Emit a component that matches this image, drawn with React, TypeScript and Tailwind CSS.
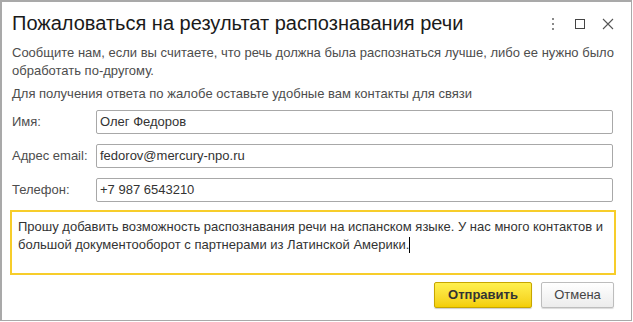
import React from "react";

export default function App() {
  const font = { fontFamily: '"Liberation Sans", Arial, sans-serif' };
  return (
    <div className="w-[633px] h-[322px] bg-white" style={font}>
      <div className="w-[632px] h-[321px] border-t-2 border-l-2 border-r border-b border-[#a9a9a9] bg-white flex flex-col">
        <div className="h-[38px] flex items-center pl-[10px] pr-[16px]">
          <div className="flex-1 text-[20px] text-[#1a1a1a] leading-none pt-[4px]">
            Пожаловаться на результат распознавания речи
          </div>
          <div className="flex items-center gap-[14px] pt-[6px]">
            <svg width="12" height="14" viewBox="0 0 12 14">
              <rect x="5" y="1" width="2" height="2" fill="#8a8a8a" />
              <rect x="5" y="6" width="2" height="2" fill="#8a8a8a" />
              <rect x="5" y="11" width="2" height="2" fill="#8a8a8a" />
            </svg>
            <svg width="14" height="14" viewBox="0 0 14 14">
              <rect x="2.5" y="2.5" width="9" height="9" fill="none" stroke="#444" strokeWidth="1" />
            </svg>
            <svg width="14" height="14" viewBox="0 0 14 14">
              <path d="M2 2 L12 12 M12 2 L2 12" stroke="#555" strokeWidth="1.1" />
            </svg>
          </div>
        </div>
        <div className="px-[10px] pt-[4px] text-[13px] leading-[18px] text-[#4d4d4d]">
          <p>Сообщите нам, если вы считаете, что речь должна была распознаться лучше, либо ее нужно было обработать по-другому.</p>
          <p className="mt-[5px]">Для получения ответа по жалобе оставьте удобные вам контакты для связи</p>
        </div>
        <div className="flex flex-col gap-[10px] mt-[7px] pl-[10px] pr-[18px]">
          {[
            ["Имя:", "Олег Федоров"],
            ["Адрес email:", "fedorov@mercury-npo.ru"],
            ["Телефон:", "+7 987 6543210"],
          ].map(([label, value]) => (
            <div key={label} className="flex items-center h-[24px]">
              <div className="w-[84px] text-[13px] text-[#4d4d4d]">{label}</div>
              <div className="flex-1 h-[24px] border border-[#a8a8a8] rounded-[2px] flex items-center px-[3px] text-[13px] text-[#333]">
                {value}
              </div>
            </div>
          ))}
        </div>
        <div className="mt-[8px] ml-[8px] mr-[15px] h-[65px] border-2 border-[#f7cd2a] px-[6px] pt-[6px] text-[13px] leading-[18px] text-[#333]">
          Прошу добавить возможность распознавания речи на испанском языке. У нас много контактов и большой документооборот с партнерами из Латинской Америки.
          <span className="inline-block w-[1px] h-[16px] bg-black align-[-4px]" />
        </div>
        <div className="flex justify-end gap-[9px] mt-[7px] mr-[17px]">
          <button className="w-[98px] h-[26px] rounded-[2px] border border-[#c7a600] bg-gradient-to-b from-[#fff04d] to-[#f3ce00] text-[13px] font-bold text-[#333] shadow-[0_1px_1px_rgba(0,0,0,0.2)]">
            Отправить
          </button>
          <button className="w-[73px] h-[26px] rounded-[2px] border border-[#bdbdbd] bg-gradient-to-b from-white to-[#ececec] text-[13px] text-[#444] shadow-[0_1px_1px_rgba(0,0,0,0.15)]">
            Отмена
          </button>
        </div>
      </div>
    </div>
  );
}
